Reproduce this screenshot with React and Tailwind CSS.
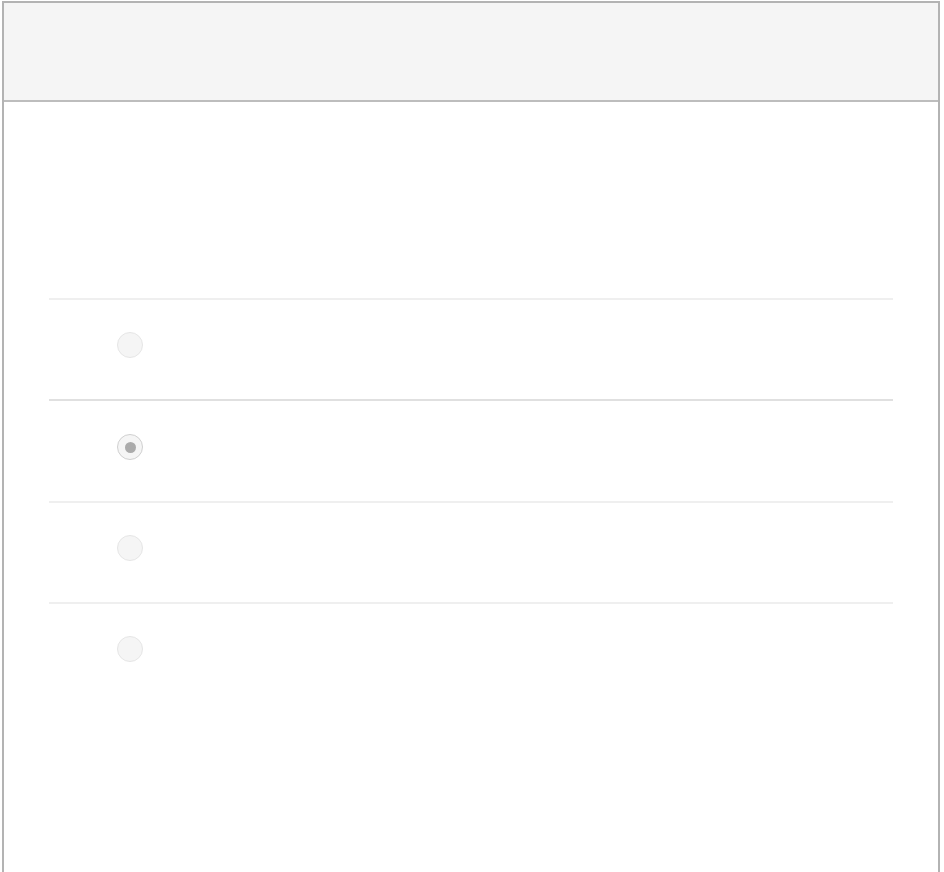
import React, { useState } from "react";

const options = [
  { id: 0, row: "h-[101px] pt-[32px]" },
  { id: 1, row: "h-[102px] pt-[33px]" },
  { id: 2, row: "h-[101px] pt-[32px]" },
  { id: 3, row: "h-[102px] pt-[32px]" },
];

const Radio = ({ checked, onClick }) => (
  <button
    onClick={onClick}
    className={`flex h-[26px] w-[26px] items-center justify-center rounded-full border-[1.5px] bg-[#f5f5f5] ${
      checked ? "border-[#d0d0d0]" : "border-[#e6e6e6]"
    }`}
  >
    {checked && <span className="h-[11px] w-[11px] rounded-full bg-[#ababab]" />}
  </button>
);

const App = () => {
  const [selected, setSelected] = useState(1);

  return (
    <div className="min-h-screen bg-white pl-[2px] pt-[1px]" style={{ fontFamily: "'Liberation Sans', Arial, sans-serif" }}>
      <div className="h-[960px] w-[938px] border-2 border-[#b3b3b3] bg-white">
        <div className="h-[99px] border-b-2 border-[#bdbdbd] bg-[#f5f5f5]" />

        <div className="mx-[45px] mt-[196px]">
          {options.map((o) => (
            <div
              key={o.id}
              className={`border-t-2 pl-[68px] ${o.row} ${
                o.id === 1 ? "border-[#e0e0e0]" : "border-[#efefef]"
              }`}
            >
              <Radio checked={selected === o.id} onClick={() => setSelected(o.id)} />
            </div>
          ))}
        </div>
      </div>
    </div>
  );
};

export default App;
